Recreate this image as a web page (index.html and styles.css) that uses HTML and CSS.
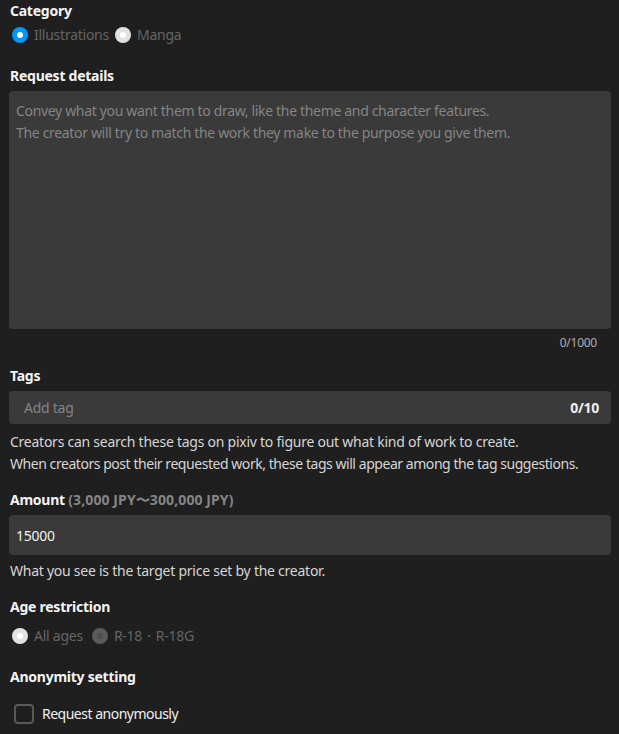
FILE: index.html
```html
<!DOCTYPE html>
<html lang="en">
<head>
<meta charset="utf-8">
<title>Request form</title>
<link rel="stylesheet" href="styles.css">
</head>
<body>
<form class="form">
  <section class="field field-category">
    <div class="label">Category</div>
    <div class="radios">
      <label class="radio"><span class="dot dot-on"></span><span class="rtext">Illustrations</span></label>
      <label class="radio"><span class="dot dot-off-light"></span><span class="rtext">Manga</span></label>
    </div>
  </section>

  <section class="field field-details">
    <div class="label">Request details</div>
    <div class="textarea">
      <div class="ph">Convey what you want them to draw, like the theme and character features.</div>
      <div class="ph">The creator will try to match the work they make to the purpose you give them.</div>
    </div>
    <div class="counter">0/1000</div>
  </section>

  <section class="field field-tags">
    <div class="label">Tags</div>
    <div class="taginput"><span class="tag-ph">Add tag</span><span class="tag-count">0/10</span></div>
    <div class="help help-tags">
      <div>Creators can search these tags on pixiv to figure out what kind of work to create.</div>
      <div class="tight">When creators post their requested work, these tags will appear among the tag suggestions.</div>
    </div>
  </section>

  <section class="field field-amount">
    <div class="label">Amount <span class="range">(3,000 JPY〜300,000 JPY)</span></div>
    <div class="amountinput">15000</div>
    <div class="help help-amount">What you see is the target price set by the creator.</div>
  </section>

  <section class="field field-age">
    <div class="label">Age restriction</div>
    <div class="radios radios-age">
      <label class="radio"><span class="dot dot-off-light"></span><span class="rtext">All ages</span></label>
      <label class="radio"><span class="dot dot-dis"></span><span class="rtext">R-18・R-18G</span></label>
    </div>
  </section>

  <section class="field field-anon">
    <div class="label">Anonymity setting</div>
    <label class="check"><span class="box"></span><span class="ctext">Request anonymously</span></label>
  </section>
</form>
</body>
</html>
```
FILE: styles.css
```css
html, body {
  margin: 0;
  padding: 0;
  background: #1f1f1f;
}
body {
  font-family: "Noto Sans", "Open Sans", sans-serif;
  font-size: 14px;
  letter-spacing: -0.25px;
  color: #f5f5f5;
  padding: 0 8px 0 9px;
  width: 602px;
  height: 734px;
  overflow: hidden;
}
.form {
  display: flex;
  flex-direction: column;
}
.field {
  display: flex;
  flex-direction: column;
}
.label {
  font-weight: 700;
  line-height: 22px;
  height: 22px;
  color: #f5f5f5;
  padding-left: 1px;
}
.range {
  color: #858585;
  letter-spacing: 0.1px;
}
.radios {
  display: flex;
  gap: 6px;
  margin-top: 2px;
  height: 22px;
  align-items: center;
  padding-left: 3px;
}
.radio {
  display: flex;
  align-items: center;
  gap: 6px;
}
.rtext {
  color: #656565;
  line-height: 22px;
}
.dot {
  width: 16px;
  height: 16px;
  border-radius: 50%;
  display: flex;
  align-items: center;
  justify-content: center;
}
.dot::after {
  content: "";
  width: 6px;
  height: 6px;
  border-radius: 50%;
  background: #fff;
}
.dot-on { background: #0096fa; }
.dot-off-light { background: #e2e2e2; }
.dot-dis { background: #5a5a5a; }
.dot-dis::after { background: #4e4e4e; }

.field-details { margin-top: 19px; }
.textarea {
  margin-top: 4px;
  height: 238px;
  box-sizing: border-box;
  background: #3a3a3a;
  border-radius: 4px;
  padding: 9px 7px;
  line-height: 22px;
  color: #858585;
  letter-spacing: -0.33px;
}
.counter {
  margin-top: 4px;
  text-align: right;
  font-size: 12px;
  line-height: 20px;
  color: #adadad;
  padding-right: 14px;
}

.field-tags { margin-top: 12px; }
.taginput {
  margin-top: 4px;
  height: 33px;
  background: #3a3a3a;
  border-radius: 4px;
  display: flex;
  align-items: center;
  justify-content: space-between;
  padding: 0 12px 0 15px;
}
.tag-ph { color: #858585; }
.tag-count { color: #f0f0f0; font-weight: 700; }
.help {
  color: #d6d6d6;
  line-height: 22px;
  padding-left: 1px;
}
.tight { letter-spacing: -0.45px; }
.help-tags { margin-top: 7px; }

.field-amount { margin-top: 14px; }
.amountinput {
  margin-top: 4px;
  height: 40px;
  box-sizing: border-box;
  background: #3a3a3a;
  border-radius: 4px;
  display: flex;
  align-items: center;
  padding: 0 7px;
  color: #f0f0f0;
}
.help-amount { margin-top: 5px; }

.field-age { margin-top: 14px; }
.radios-age { margin-top: 7px; gap: 9px; }

.field-anon { margin-top: 19px; }
.check {
  display: flex;
  align-items: center;
  gap: 8px;
  margin-top: 15px;
  padding-left: 5px;
  height: 22px;
}
.box {
  width: 20px;
  height: 20px;
  box-sizing: border-box;
  border: 2px solid #595959;
  border-radius: 4px;
}
.ctext { color: #f0f0f0; line-height: 22px; letter-spacing: -0.5px; }
```
